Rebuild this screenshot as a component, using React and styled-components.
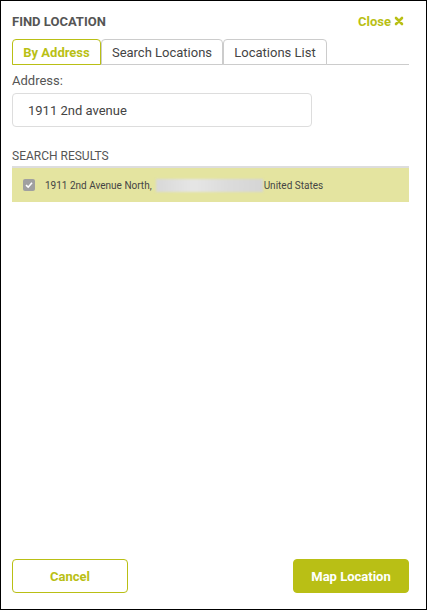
import React, { useState } from "react";
import styled, { createGlobalStyle } from "styled-components";

const olive = "#b9bf15";

const GlobalStyle = createGlobalStyle`
  html, body {
    margin: 0;
    padding: 0;
    height: 100%;
  }
  body {
    font-family: Roboto, "Liberation Sans", Arial, sans-serif;
    background: #fff;
  }
  #root {
    height: 100%;
  }
  * {
    box-sizing: border-box;
  }
`;

const Panel = styled.div`
  height: 610px;
  border: 1px solid #000;
  display: flex;
  flex-direction: column;
  padding: 0 17px 16px 11px;
`;

const Header = styled.div`
  display: flex;
  justify-content: space-between;
  align-items: center;
  height: 38px;
  padding-top: 2px;
`;

const Title = styled.h1`
  margin: 0;
  font-size: 13px;
  font-weight: 700;
  color: #555;
`;

const CloseLink = styled.a`
  font-size: 13px;
  font-weight: 700;
  color: ${olive};
  margin-right: 5px;
  display: flex;
  align-items: center;
  gap: 3px;
  cursor: pointer;
`;

const Tabs = styled.div`
  display: flex;
  border-bottom: 1px solid #ccc;
`;

const Tab = styled.button`
  font-family: inherit;
  font-size: 13px;
  width: ${(p) => p.$width}px;
  height: 26px;
  margin-bottom: -1px;
  padding: 0;
  background: #fff;
  border: 1px solid ${(p) => (p.$active ? olive : "#ccc")};
  border-radius: 4px 4px 0 0;
  color: ${(p) => (p.$active ? olive : "#444")};
  font-weight: ${(p) => (p.$active ? 700 : 400)};
  cursor: pointer;
`;

const Label = styled.div`
  font-size: 13px;
  color: #555;
  margin-top: 8px;
`;

const Input = styled.input`
  display: block;
  margin-top: 5px;
  width: 300px;
  height: 34px;
  border: 1px solid #ddd;
  border-radius: 4px;
  padding: 0 15px;
  font-family: inherit;
  font-size: 13px;
  color: #444;
  outline: none;
`;

const SectionTitle = styled.div`
  font-size: 12px;
  color: #555;
  margin-top: 22px;
`;

const ResultRow = styled.label`
  display: flex;
  align-items: center;
  height: 36px;
  margin-top: 3px;
  background: #e4e4a0;
  border-top: 2px solid #ddd;
  padding-left: 11px;
  font-size: 10px;
  color: #444;
`;

const Check = styled.span`
  width: 12px;
  height: 12px;
  border-radius: 2px;
  background: #a0a0a0;
  display: flex;
  align-items: center;
  justify-content: center;
  margin-right: 10px;
`;

const Blurred = styled.span`
  display: inline-block;
  width: 107px;
  height: 13px;
  margin: 0 1px 0 4px;
  background: linear-gradient(
    90deg,
    #d8d8d8 0%,
    #e6e6e6 35%,
    #dcdcdc 65%,
    #d5d5d5 100%
  );
  filter: blur(1px);
`;

const Spacer = styled.div`
  flex: 1;
`;

const Footer = styled.div`
  display: flex;
  justify-content: space-between;
`;

const Button = styled.button`
  width: 116px;
  height: 34px;
  border-radius: 4px;
  font-family: inherit;
  font-size: 13px;
  font-weight: 700;
  cursor: pointer;
  border: 1px solid ${olive};
  background: ${(p) => (p.$primary ? olive : "#fff")};
  color: ${(p) => (p.$primary ? "#fff" : olive)};
`;

export default function App() {
  const [tab, setTab] = useState(0);
  const [address, setAddress] = useState("1911 2nd avenue");
  const tabs = [
    { name: "By Address", width: 89 },
    { name: "Search Locations", width: 122 },
    { name: "Locations List", width: 104 },
  ];

  return (
    <>
      <GlobalStyle />
      <Panel>
        <Header>
          <Title>FIND LOCATION</Title>
          <CloseLink>
            Close
            <svg width="10" height="10" viewBox="0 0 10 10">
              <path
                d="M2 2 L8 8 M8 2 L2 8"
                stroke={olive}
                strokeWidth="2.6"
                strokeLinecap="round"
              />
            </svg>
          </CloseLink>
        </Header>
        <Tabs>
          {tabs.map((t, i) => (
            <Tab
              key={t.name}
              $active={tab === i}
              $width={t.width}
              onClick={() => setTab(i)}
            >
              {t.name}
            </Tab>
          ))}
        </Tabs>
        <Label>Address:</Label>
        <Input value={address} onChange={(e) => setAddress(e.target.value)} />
        <SectionTitle>SEARCH RESULTS</SectionTitle>
        <ResultRow>
          <Check>
            <svg width="8" height="8" viewBox="0 0 8 8">
              <path
                d="M1 4.2 L3.2 6.2 L7 1.8"
                fill="none"
                stroke="#fff"
                strokeWidth="1.6"
              />
            </svg>
          </Check>
          1911 2nd Avenue North,
          <Blurred />
          United States
        </ResultRow>
        <Spacer />
        <Footer>
          <Button>Cancel</Button>
          <Button $primary>Map Location</Button>
        </Footer>
      </Panel>
    </>
  );
}
